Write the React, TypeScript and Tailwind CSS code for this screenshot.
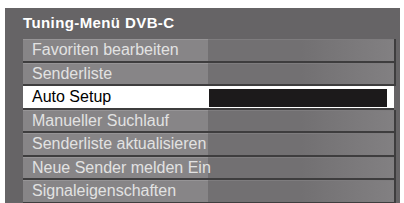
import React from 'react';

interface MenuItem {
    label: string;
    active?: boolean;
}

const items: MenuItem[] = [
    { label: 'Favoriten bearbeiten' },
    { label: 'Senderliste' },
    { label: 'Auto Setup', active: true },
    { label: 'Manueller Suchlauf' },
    { label: 'Senderliste aktualisieren' },
    { label: 'Neue Sender melden Ein' },
    { label: 'Signaleigenschaften' },
];

const MenuRow: React.FC<{ item: MenuItem }> = ({ item }) => {
    if (item.active) {
        return (
            <div className="flex h-[23.5px] shrink-0 border-b-2 border-[#3e3d3e] bg-white mr-[2px]">
                <div className="w-[185px] pl-[9px] text-[16px] leading-[21px] text-black whitespace-nowrap">
                    {item.label}
                </div>
                <div className="flex-1 pt-[3px] pb-[1px] pl-[1px] pr-[7px]">
                    <div className="h-full bg-[#1c1a1b]" />
                </div>
            </div>
        );
    }

    return (
        <div className="flex h-[23.5px] shrink-0 border-b-2 border-r-2 border-[#3e3d3e]">
            <div className="w-[185px] bg-[#878587] border-t border-[#969496] pl-[9px] text-[16px] leading-[20px] text-[#e2e2e2] whitespace-nowrap">
                <span className="relative z-10">{item.label}</span>
            </div>
            <div className="flex-1 bg-gradient-to-r from-[#727072] via-[#727072] to-[#828082] border-t border-[#7e7c7e]" />
        </div>
    );
};

export default function App() {
    return (
        <div className="w-[404px] h-[203px] bg-white overflow-hidden pt-2 pl-[5px]" style={{ fontFamily: '"Liberation Sans", Arial, sans-serif' }}>
            <div className="w-[395px] h-[200px] bg-[#666466] pl-[18px] pr-[4px]">
                <div className="h-[31px] pt-[7px] text-[15px] font-bold leading-[15px] tracking-[0.4px] text-white">
                    Tuning-Menü DVB-C
                </div>
                <div className="flex flex-col">
                    {items.map((item) => (
                        <MenuRow key={item.label} item={item} />
                    ))}
                </div>
            </div>
        </div>
    );
}
